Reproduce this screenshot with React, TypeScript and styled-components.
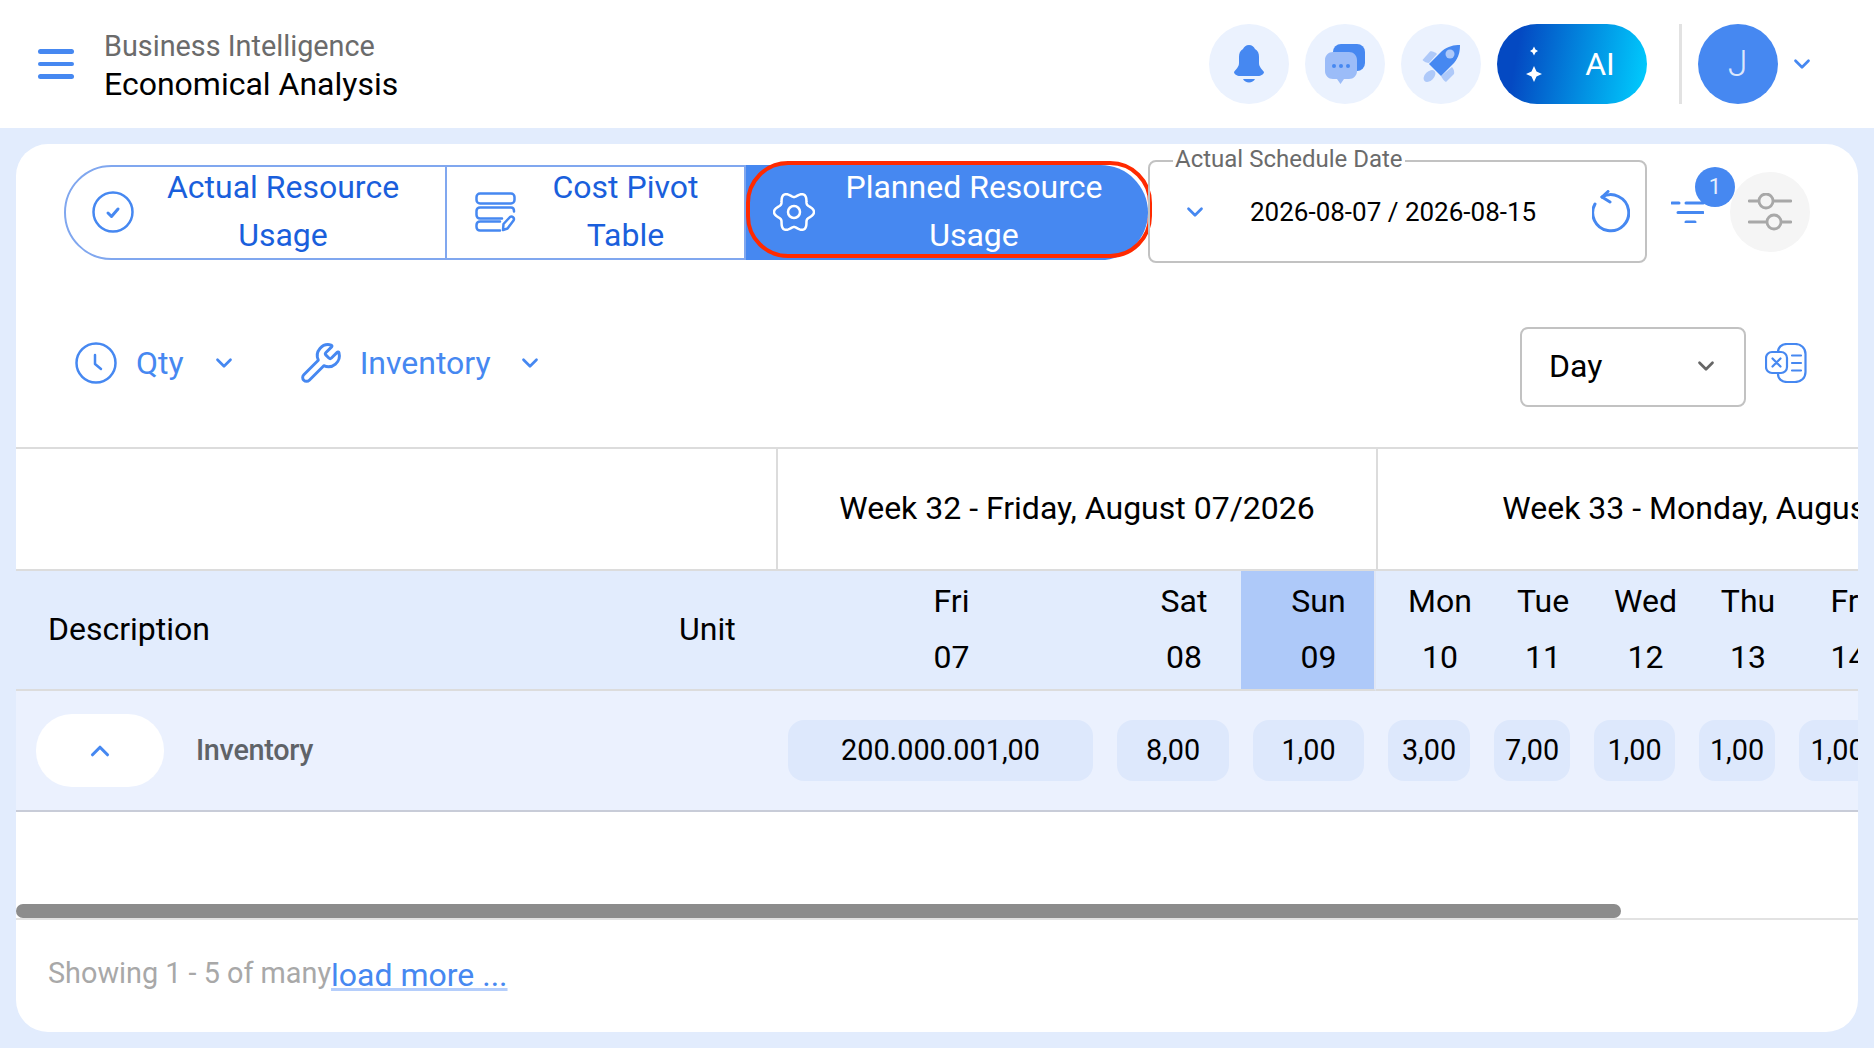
import { ChevronDown, ChevronUp, Wrench } from 'lucide-react';
import styled, { createGlobalStyle } from 'styled-components';

const GlobalStyle = createGlobalStyle`
  html, body {
    margin: 0;
    padding: 0;
    height: 100%;
    background: #e2ecfd;
    font-family: Roboto, "Liberation Sans", sans-serif;
  }
  *, *::before, *::after { box-sizing: border-box; }
`;

const Page = styled.div`
  width: 1874px;
  height: 1048px;
  overflow: hidden;
  background: #e2ecfd;
`;

const Header = styled.header`
  height: 128px;
  background: #fff;
  display: flex;
  align-items: center;
  padding: 0 0 0 38px;
`;

const Burger = styled.div`
  width: 36px;
  display: flex;
  flex-direction: column;
  gap: 8px;
  margin-right: 30px;
  span {
    height: 4.5px;
    border-radius: 3px;
    background: #4688f1;
  }
`;

const Titles = styled.div`
  flex: 1;
  display: flex;
  flex-direction: column;
  margin-top: 3px;
`;

const Crumb = styled.div`
  font-size: 28.8px;
  line-height: 36px;
  color: #6b6b6b;
`;

const PageTitle = styled.div`
  font-size: 32px;
  line-height: 40px;
  color: #000;
`;

const Actions = styled.div`
  display: flex;
  align-items: center;
  gap: 16px;
  padding-right: 59.4px;
`;

const RoundButton = styled.div`
  width: 80px;
  height: 80px;
  border-radius: 50%;
  background: #ebf2fe;
  display: flex;
  align-items: center;
  justify-content: center;
`;

const AiButton = styled.div`
  width: 150px;
  height: 80px;
  border-radius: 40px;
  background: linear-gradient(100deg, #0449c2 15%, #00cfff 100%);
  color: #fff;
  font-size: 32px;
  display: flex;
  align-items: center;
  padding-left: 29px;
  gap: 43px;
`;

const Rule = styled.div`
  width: 3px;
  height: 80px;
  background: #e2e2e2;
  margin-left: 16px;
`;

const Avatar = styled.div`
  width: 80px;
  height: 80px;
  border-radius: 50%;
  background: #4688f1;
  color: #dce7fc;
  font-size: 36px;
  font-weight: 300;
  display: flex;
  align-items: center;
  justify-content: center;
  margin-left: -0.6px;
`;

const AccountChevron = styled(ChevronDown)`
  margin-left: -5px;
  color: #4688f1;
`;

const Card = styled.main`
  width: 1842px;
  height: 888px;
  margin: 16px 0 0 16px;
  background: #fff;
  border-radius: 32px;
  overflow: hidden;
`;

const TopBar = styled.div`
  display: flex;
  align-items: center;
  height: 103px;
  margin-top: 16px;
  padding-left: 48px;
`;

const Tabs = styled.div`
  display: flex;
  width: 1084px;
  height: 95px;
  margin-top: 1px;
  flex: none;
`;

const Tab = styled.div<{ $width: number; $left: number; $right: number; $first?: boolean; $active?: boolean }>`
  position: relative;
  width: ${(p) => p.$width}px;
  flex: none;
  display: flex;
  align-items: center;
  padding: 0 ${(p) => p.$right}px 1px ${(p) => p.$left}px;
  gap: 7px;
  font-size: 32px;
  line-height: 48px;
  text-align: center;
  color: ${(p) => (p.$active ? '#fff' : '#1a5fdc')};
  background: ${(p) => (p.$active ? '#4688f1' : '#fff')};
  border: ${(p) => (p.$active ? 'none' : '2px solid #80a7ef')};
  border-left-width: ${(p) => (p.$first || p.$active ? undefined : '0')};
  border-radius: ${(p) => (p.$first ? '48px 0 0 48px' : p.$active ? '0 48px 48px 0' : '0')};

  ${(p) =>
    p.$active &&
    `
    &::after {
      content: '';
      position: absolute;
      left: 0;
      top: -4px;
      width: 406px;
      height: 97px;
      border: 4px solid #ff2a00;
      border-radius: 42px;
    }
  `}
`;

const TabLabel = styled.span`
  flex: 1;
  margin-top: -1px;
`;

const DateBox = styled.div`
  position: relative;
  width: 499px;
  height: 103px;
  flex: none;
  border: 2px solid #c2c2c2;
  border-radius: 8px;
  display: flex;
  align-items: center;
  padding: 0 15px 0 32px;
`;

const DateLabel = styled.span`
  position: absolute;
  left: 23px;
  top: -17px;
  padding: 0 2px;
  background: #fff;
  font-size: 24px;
  line-height: 28px;
  color: #6b6b6b;
`;

const DateValue = styled.span`
  font-size: 26px;
  color: #000;
  margin-left: 42px;
  flex: 1;
`;

const FilterWrap = styled.div`
  position: relative;
  width: 33px;
  height: 22px;
  margin-left: 24px;
  flex: none;
`;

const Badge = styled.span`
  position: absolute;
  left: 24px;
  top: -34px;
  width: 40px;
  height: 40px;
  border-radius: 50%;
  background: #4688f1;
  color: #e8effd;
  font-size: 22px;
  display: flex;
  align-items: center;
  justify-content: center;
`;

const GreyRound = styled(RoundButton)`
  background: #f5f5f5;
  margin-left: 26px;
  flex: none;
`;

const SecondBar = styled.div`
  display: flex;
  align-items: center;
  height: 80px;
  margin-top: 64px;
  padding: 0 51px 0 59px;
`;

const Picker = styled.div<{ $gap: number; $right: number }>`
  display: flex;
  align-items: center;
  gap: ${(p) => p.$gap}px;
  margin-right: ${(p) => p.$right}px;
  margin-top: -9px;
  font-size: 32px;
  color: #4688f1;
`;

const PickerChevron = styled(ChevronDown)<{ $nudge: number }>`
  margin-left: ${(p) => p.$nudge}px;
  color: #4688f1;
`;

const Spacer = styled.div`
  flex: 1;
`;

const DaySelect = styled.div`
  width: 226px;
  height: 80px;
  border: 2px solid #c2c2c2;
  border-radius: 8px;
  display: flex;
  align-items: center;
  justify-content: space-between;
  padding: 0 25px 2px 27px;
  font-size: 32px;
  color: #000;
  margin-right: 19px;
`;

const ExportButton = styled.div`
  margin-top: -9px;
`;

const TableViewport = styled.div`
  height: 457px;
  margin-top: 40px;
  overflow: hidden;
`;

const Table = styled.table`
  width: 2114px;
  table-layout: fixed;
  border-collapse: separate;
  border-spacing: 0;
  border-top: 2px solid #dcdcdc;
`;

const WeekCell = styled.th<{ $line?: boolean }>`
  height: 122px;
  padding: 0 0 2px;
  font-size: 32px;
  font-weight: 400;
  color: #000;
  text-align: center;
  background: #fff;
  border-bottom: 2px solid #dcdcdc;
  border-left: ${(p) => (p.$line ? '2px solid #dcdcdc' : 'none')};
`;

const HeadCell = styled.th<{ $left?: number }>`
  height: 120px;
  padding: 0 0 2px ${(p) => p.$left ?? 0}px;
  font-size: 32px;
  font-weight: 400;
  color: #000;
  text-align: left;
  background: #e2ecfd;
  border-bottom: 2px solid #dcdcdc;
`;

const DayCell = styled.th<{ $today?: boolean }>`
  height: 120px;
  padding: 0 0 2px 22px;
  font-size: 32px;
  line-height: 56px;
  font-weight: 400;
  color: #000;
  text-align: center;
  background: ${(p) => (p.$today ? '#aec9f9' : '#e2ecfd')};
  border-bottom: 2px solid #dcdcdc;
  border-right: ${(p) => (p.$today ? '2px solid #dfe6f5' : 'none')};
  div {
    display: block;
  }
`;

const GroupCell = styled.td`
  height: 121px;
  padding: 0 0 0 20px;
  background: #ebf1fe;
  border-bottom: 2px solid #c8ccd8;
`;

const GroupInner = styled.div`
  display: flex;
  align-items: center;
  gap: 32px;
`;

const CollapseButton = styled.div`
  width: 128px;
  height: 73px;
  border-radius: 36px;
  background: #fff;
  color: #4688f1;
  display: flex;
  align-items: center;
  justify-content: center;
`;

const GroupName = styled.span`
  font-size: 28.8px;
  line-height: 30px;
  padding-bottom: 2px;
  font-weight: 500;
  color: #5f6368;
  letter-spacing: -0.3px;
`;

const ValueCell = styled.td`
  height: 121px;
  padding: 0 12px;
  background: #ebf1fe;
  border-bottom: 2px solid #c8ccd8;
`;

const Pill = styled.div`
  height: 61px;
  padding-bottom: 2px;
  border-radius: 16px;
  background: #dde8fc;
  font-size: 28.8px;
  color: #000;
  display: flex;
  align-items: center;
  justify-content: center;
  white-space: nowrap;
  overflow: hidden;
`;

const ScrollTrack = styled.div`
  height: 16px;
  border-bottom: 2px solid #e2e2e2;
`;

const ScrollThumb = styled.div`
  height: 14px;
  border-radius: 7px;
  background: #8c8c8c;
`;

const Footer = styled.div`
  display: flex;
  align-items: center;
  height: 112px;
  padding: 0 0 2px 32px;
`;

const Showing = styled.span`
  font-size: 28.8px;
  color: #a8a8a8;
  margin-top: -5px;
`;

const LoadMore = styled.a`
  font-size: 32px;
  color: #4688f1;
  text-decoration: underline;
  text-decoration-color: #b5cefb;
`;

const IconBox = styled.svg`
  flex: none;
  display: block;
`;

const blue = '#4688f1';
const light = '#aec9f9';

function gearPath() {
  const pts: string[] = [];
  for (let i = 0; i < 120; i++) {
    const t = (i / 120) * Math.PI * 2;
    const r = 17.5 + 2.5 * Math.cos(6 * t);
    pts.push(`${(21 + r * Math.cos(t)).toFixed(2)} ${(20 + r * Math.sin(t)).toFixed(2)}`);
  }
  return `M${pts.join('L')}Z`;
}

const Bell = () => (
  <IconBox width="30" height="38" viewBox="0 0 30 38" fill={blue}>
    <path d="M15 0C18 0 20 2 21 4C24 5.5 25 8.5 25 12L25 18C25 22 28 24 30 27C30 29 27 31 24 31L6 31C3 31 0 29 0 27C2 24 5 22 5 18L5 12C5 8.5 6 5.5 9 4C10 2 12 0 15 0Z" />
    <path d="M9 34L21 34C20 36 17.5 37.5 15 37.5C12.5 37.5 10 36 9 34Z" />
  </IconBox>
);

const Chat = () => (
  <IconBox width="40" height="40" viewBox="0 0 40 40">
    <rect x="8" y="0" width="32" height="27" rx="8" fill={blue} />
    <path d="M8 8H24C28.5 8 32 11.5 32 16V27C32 31.5 28.5 35 24 35H19L15.500 40L12 35H8C3.500 35 0 31.500 0 27V16C0 11.500 3.500 8 8 8Z" fill="#9bbcf8" />
    <circle cx="9" cy="22" r="2" fill={blue} />
    <circle cx="16" cy="22" r="2" fill={blue} />
    <circle cx="23" cy="22" r="2" fill={blue} />
  </IconBox>
);

const Rocket = () => (
  <IconBox width="38" height="38" viewBox="0 0 38 38">
    <path d="M0.500 15L8 6.500C9 5.500 14 7.500 15 9L7 18C5 18 2 17 0.500 15Z" fill={light} />
    <path d="M30 22C32 24 32.500 27 32 29L24 37C22 36 20 33 19 31Z" fill={light} />
    <ellipse cx="7.500" cy="31" rx="7" ry="4.500" transform="rotate(-45 7.500 31)" fill={light} />
    <path d="M7 19L20 6C26 1 32 0 38 0C38 6 37 12 32 18L19 31Z" fill={blue} />
    <circle cx="28" cy="9" r="4.500" fill={light} />
  </IconBox>
);

const Sparkles = () => (
  <IconBox width="16" height="36" viewBox="0 0 16 36" fill="#fff">
    <path d="M8 0.500L9.500 3.500L12 5L9.500 6.500L8 9.500L6.500 6.500L4 5L6.500 3.500Z" />
    <path d="M8 20L10.500 25.500L16 28L10.500 30.500L8 36L5.500 30.500L0 28L5.500 25.500Z" />
  </IconBox>
);

const CheckCircle = () => (
  <IconBox width="42" height="42" viewBox="0 0 42 42" fill="none" stroke={blue} strokeWidth="2.500" strokeLinecap="round" strokeLinejoin="round">
    <circle cx="21" cy="21" r="19.500" />
    <path d="M16 22L19.500 25.500L26 18" strokeWidth="3" />
  </IconBox>
);

const TableEdit = () => (
  <IconBox width="42" height="40" viewBox="0 0 42 40" fill="none" stroke={blue} strokeWidth="2.500" strokeLinecap="round" strokeLinejoin="round">
    <rect x="1.500" y="1.500" width="38" height="10" rx="3.500" />
    <path d="M39 19.500V19C39 17 38 15.500 36 15.500H5C3 15.500 1.500 17 1.500 19V23C1.500 25 3 26.500 5 26.500H27" />
    <path d="M25 29.500H5C3 29.500 1.500 31 1.500 33V35C1.500 37 3 38.500 5 38.500H25" />
    <path d="M28 38L28.500 32L35 25C37 23.500 40 26 38.500 28.500L32.500 36.500Z" />
  </IconBox>
);

const Gear = () => (
  <IconBox width="42" height="40" viewBox="0 0 42 40" fill="none" stroke="#fff" strokeWidth="2.500" strokeLinejoin="round">
    <path d={gearPath()} />
    <circle cx="21" cy="20" r="6" />
  </IconBox>
);

const ResetIcon = () => (
  <IconBox width="38" height="44" viewBox="0 0 38 44" fill="none" stroke={blue} strokeWidth="3" strokeLinecap="round" strokeLinejoin="round">
    <path d="M10 7A18 18 0 1 1 3 14" />
    <path d="M16 1.500L10 7L18 12" />
  </IconBox>
);

const FilterIcon = () => (
  <IconBox width="33" height="22" viewBox="0 0 33 22" fill="none" stroke={blue} strokeWidth="3" strokeLinecap="round">
    <path d="M1 2H8M15 2H32M7 11.500H32M15 21H24" />
  </IconBox>
);

const SlidersIcon = () => (
  <IconBox width="44" height="38" viewBox="0 0 44 38" fill="none" stroke="#a8a8a8" strokeWidth="2.800" strokeLinecap="round">
    <path d="M1 8H10M26 8H43M1 29H18M34 29H43" />
    <circle cx="18" cy="8" r="7" />
    <circle cx="26" cy="29" r="7" />
  </IconBox>
);

const ClockIcon = () => (
  <IconBox width="42" height="42" viewBox="0 0 42 42" fill="none" stroke={blue} strokeWidth="2.500" strokeLinecap="round" strokeLinejoin="round">
    <circle cx="21" cy="21" r="19.500" />
    <path d="M20 13V22L26 27" />
  </IconBox>
);

const ExcelIcon = () => (
  <IconBox width="42" height="40" viewBox="0 0 42 40" fill="none" stroke={blue} strokeWidth="2.200" strokeLinecap="round">
    <path d="M13 9C13 4 17 1 22 1H30C36 1 40.500 5 40.500 11V29C40.500 35 36 39 30 39H22C17 39 13 36 13 31" />
    <rect x="1" y="9" width="21" height="21" rx="6" />
    <path d="M7.500 15.500L15.500 23.500M15.500 15.500L7.500 23.500M27 12.500H36M27 20H36M27 27.500H36" />
  </IconBox>
);

const widths = [629, 131, 329, 136, 135, 106, 100, 105, 100, 101, 242];
const days = [
  ['Fri', '07'],
  ['Sat', '08'],
  ['Sun', '09'],
  ['Mon', '10'],
  ['Tue', '11'],
  ['Wed', '12'],
  ['Thu', '13'],
  ['Fri', '14'],
  ['Sat', '15'],
];
const values = ['200.000.001,00', '8,00', '1,00', '3,00', '7,00', '1,00', '1,00', '1,00', '2,00'];

export default function App() {
  return (
    <Page>
      <GlobalStyle />
      <Header>
        <Burger>
          <span />
          <span />
          <span />
        </Burger>
        <Titles>
          <Crumb>Business Intelligence</Crumb>
          <PageTitle>Economical Analysis</PageTitle>
        </Titles>
        <Actions>
          <RoundButton>
            <Bell />
          </RoundButton>
          <RoundButton>
            <Chat />
          </RoundButton>
          <RoundButton>
            <Rocket />
          </RoundButton>
          <AiButton>
            <Sparkles />
            AI
          </AiButton>
          <Rule />
          <Avatar>J</Avatar>
          <AccountChevron size={26} strokeWidth={2.5} />
        </Actions>
      </Header>

      <Card>
        <TopBar>
          <Tabs>
            <Tab $width={383} $left={26} $right={20} $first>
              <CheckCircle />
              <TabLabel>Actual Resource Usage</TabLabel>
            </Tab>
            <Tab $width={299} $left={28} $right={17}>
              <TableEdit />
              <TabLabel>Cost Pivot Table</TabLabel>
            </Tab>
            <Tab $width={402} $left={27} $right={22} $active>
              <Gear />
              <TabLabel>Planned Resource Usage</TabLabel>
            </Tab>
          </Tabs>
          <DateBox>
            <DateLabel>Actual Schedule Date</DateLabel>
            <ChevronDown size={26} color={blue} strokeWidth={2.5} />
            <DateValue>2026-08-07 / 2026-08-15</DateValue>
            <ResetIcon />
          </DateBox>
          <FilterWrap>
            <FilterIcon />
            <Badge>1</Badge>
          </FilterWrap>
          <GreyRound>
            <SlidersIcon />
          </GreyRound>
        </TopBar>

        <SecondBar>
          <Picker $gap={19} $right={62}>
            <ClockIcon />
            Qty
            <PickerChevron size={26} strokeWidth={2.5} $nudge={8} />
          </Picker>
          <Picker $gap={17} $right={0}>
            <Wrench size={44} strokeWidth={1.6} />
            Inventory
            <PickerChevron size={26} strokeWidth={2.5} $nudge={9} />
          </Picker>
          <Spacer />
          <DaySelect>
            Day
            <ChevronDown size={26} color="#666" strokeWidth={2.5} />
          </DaySelect>
          <ExportButton>
            <ExcelIcon />
          </ExportButton>
        </SecondBar>

        <TableViewport>
          <Table>
            <colgroup>
              {widths.map((w, i) => (
                <col key={i} width={w} />
              ))}
            </colgroup>
            <thead>
              <tr>
                <WeekCell colSpan={2} />
                <WeekCell colSpan={3} $line>
                  Week 32 - Friday, August 07/2026
                </WeekCell>
                <WeekCell colSpan={6} $line>
                  Week 33 - Monday, August 10/2026
                </WeekCell>
              </tr>
              <tr>
                <HeadCell $left={32}>Description</HeadCell>
                <HeadCell $left={34}>Unit</HeadCell>
                {days.map(([name, num], i) => (
                  <DayCell key={i} $today={name === 'Sun'}>
                    <div>{name}</div>
                    <div>{num}</div>
                  </DayCell>
                ))}
              </tr>
            </thead>
            <tbody>
              <tr>
                <GroupCell colSpan={2}>
                  <GroupInner>
                    <CollapseButton>
                      <ChevronUp size={30} strokeWidth={2.5} />
                    </CollapseButton>
                    <GroupName>Inventory</GroupName>
                  </GroupInner>
                </GroupCell>
                {values.map((v, i) => (
                  <ValueCell key={i}>
                    <Pill>{v}</Pill>
                  </ValueCell>
                ))}
              </tr>
            </tbody>
          </Table>
        </TableViewport>

        <ScrollTrack>
          <ScrollThumb style={{ width: `${(1605 / 1842) * 100}%` }} />
        </ScrollTrack>

        <Footer>
          <Showing>Showing 1 - 5 of many</Showing>
          <LoadMore>load more ...</LoadMore>
        </Footer>
      </Card>
    </Page>
  );
}
